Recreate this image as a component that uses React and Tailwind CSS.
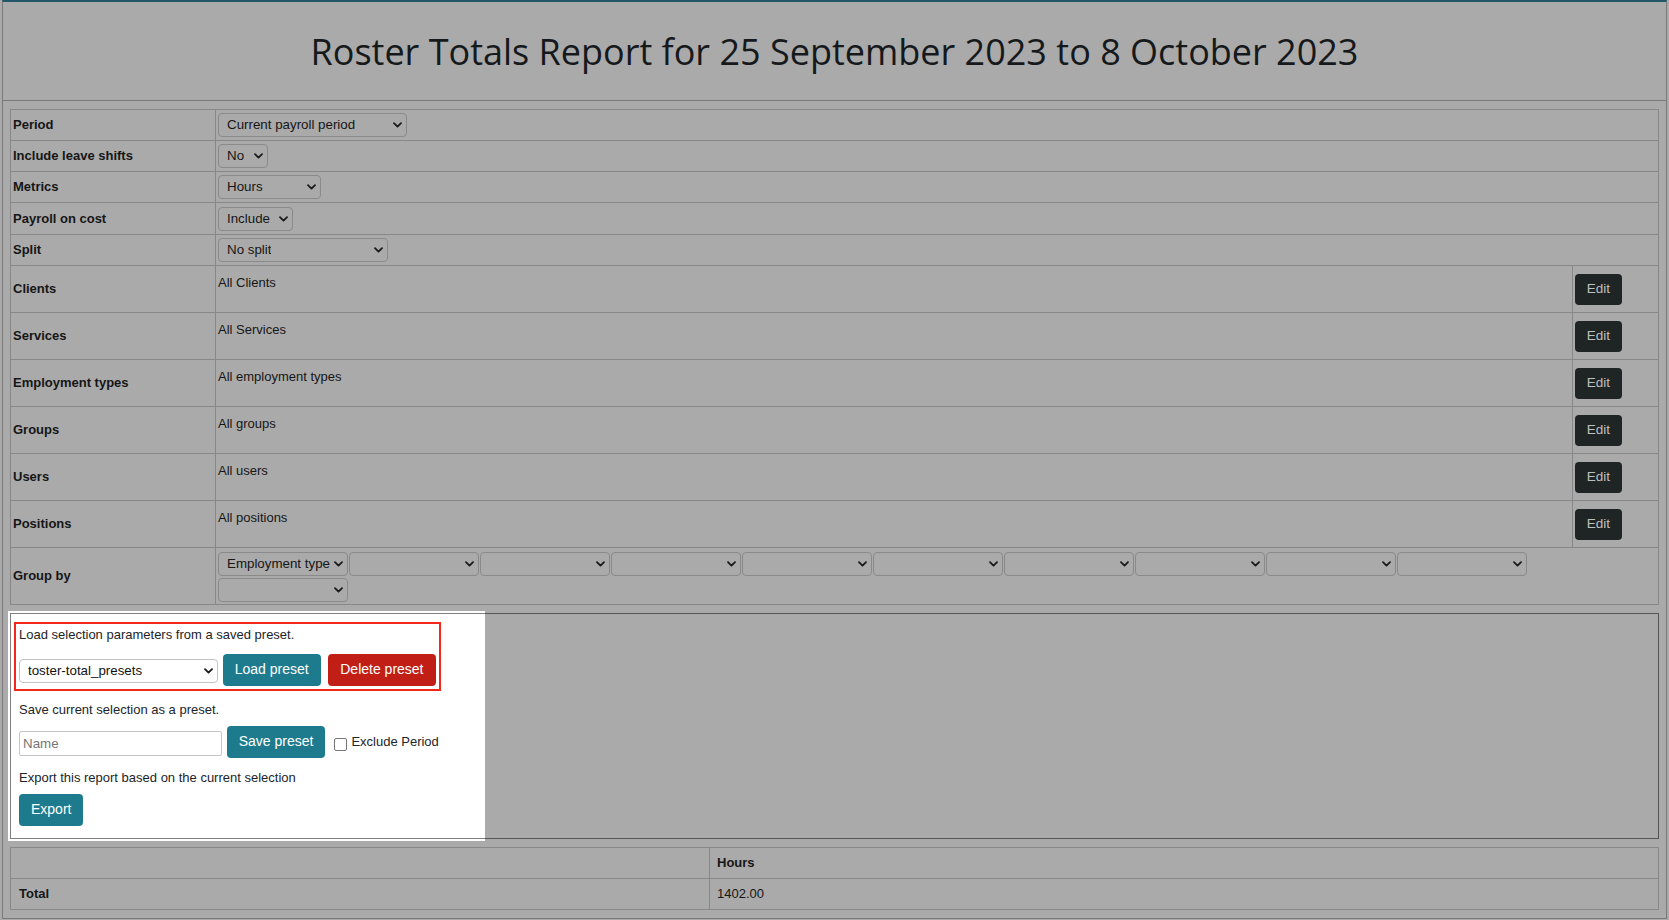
import React from "react";

const Chevron = () => (
  <svg width="9" height="6" viewBox="0 0 9 6" className="shrink-0">
    <path d="M1 1.2 L4.5 4.6 L8 1.2" fill="none" stroke="#1a1a1a" strokeWidth="1.8" strokeLinecap="round" strokeLinejoin="round" />
  </svg>
);

function Select({ className, text, light }) {
  return (
    <div
      className={
        "flex h-[24px] shrink-0 items-center justify-between rounded-[4px] border pl-[8px] pr-[4px] text-[13.33px] leading-[16px] " +
        (light ? "border-[#c4c4c4] bg-white text-[#111111] " : "border-[#8a8a8a] text-[#161616] ") +
        className
      }
    >
      <span className="truncate">{text}</span>
      <Chevron />
    </div>
  );
}

const simpleRows = [
  { label: "Period", h: "h-[31px]", sel: <Select className="w-[189px]" text="Current payroll period" /> },
  { label: "Include leave shifts", h: "h-[31px]", sel: <Select className="w-[49.5px]" text="No" /> },
  { label: "Metrics", h: "h-[31px]", sel: <Select className="w-[103px]" text="Hours" /> },
  { label: "Payroll on cost", h: "h-[32px]", sel: <Select className="w-[75px]" text="Include" /> },
  { label: "Split", h: "h-[31px]", sel: <Select className="w-[170px]" text="No split" /> },
];

const editRows = [
  ["Clients", "All Clients"],
  ["Services", "All Services"],
  ["Employment types", "All employment types"],
  ["Groups", "All groups"],
  ["Users", "All users"],
  ["Positions", "All positions"],
];

function Btn({ children, className }) {
  return (
    <div className={"flex shrink-0 items-center rounded-[4px] px-[12px] text-[14px] text-white " + className}>
      {children}
    </div>
  );
}

export default function App() {
  return (
    <div className="min-h-screen w-full bg-[#aaaaaa] font-['Liberation_Sans',Arial,sans-serif] text-[#161616]">
      <div className="ml-[2px] h-[919px] w-[1665px] border border-[#7a7a7a] border-t-2 border-t-[#24566a]">
        {/* header */}
        <div className="flex h-[99px] justify-center border-b border-[#7a7a7a] pt-[24.5px]">
          <h1 className="font-['Open_Sans',sans-serif] text-[36px] leading-[49px] font-normal text-[#16191c]">
            Roster Totals Report for 25 September 2023 to 8 October 2023
          </h1>
        </div>

        <div className="px-[7px] pt-[8px]">
          {/* main table */}
          <div className="border-l border-t border-[#888888] text-[13px]">
            {simpleRows.map((r) => (
              <div key={r.label} className={"flex border-b border-[#888888] " + r.h}>
                <div className="flex w-[205px] shrink-0 items-center border-r border-[#888888] pl-[2px] font-bold">
                  {r.label}
                </div>
                <div className="flex flex-1 items-center border-r border-[#888888] pl-[2px]">{r.sel}</div>
              </div>
            ))}
            {editRows.map(([label, value]) => (
              <div key={label} className="flex h-[47px] border-b border-[#888888]">
                <div className="flex w-[205px] shrink-0 items-center border-r border-[#888888] pl-[2px] font-bold">
                  {label}
                </div>
                <div className="flex-1 border-r border-[#888888] pl-[2px] pt-[9px] leading-[15px]">{value}</div>
                <div className="flex w-[86px] shrink-0 items-center border-r border-[#888888] pl-[2px]">
                  <div className="flex h-[31px] w-[47px] items-center justify-center rounded-[4px] bg-[#1f2425] text-[13.5px] text-[#bfbfbf]">
                    Edit
                  </div>
                </div>
              </div>
            ))}
            <div className="flex h-[57px] border-b border-[#888888]">
              <div className="flex w-[205px] shrink-0 items-center border-r border-[#888888] pl-[2px] font-bold">
                Group by
              </div>
              <div className="flex flex-1 flex-col gap-[2.7px] border-r border-[#888888] pl-[2px] pt-[3.5px]">
                <div className="flex gap-x-[1.5px]">
                  <Select className="w-[129.5px]" text="Employment type" />
                  <Select className="w-[129.5px]" text="" />
                  <Select className="w-[129.5px]" text="" />
                  <Select className="w-[129.5px]" text="" />
                  <Select className="w-[129.5px]" text="" />
                  <Select className="w-[129.5px]" text="" />
                  <Select className="w-[129.5px]" text="" />
                  <Select className="w-[129.5px]" text="" />
                  <Select className="w-[129.5px]" text="" />
                  <Select className="w-[129.5px]" text="" />
                </div>
                <div className="flex">
                  <Select className="w-[129.5px]" text="" />
                </div>
              </div>
            </div>
          </div>

          {/* presets panel */}
          <div className="relative mt-[8px]">
            <div className="absolute left-[-2.5px] top-[-2px] h-[230px] w-[477.5px] bg-white" />
            <div className="relative h-[226px] border border-black/50 pl-[8px] pt-[12.5px] text-[13px] leading-[15px] text-[#212529]">
              <div className="w-fit outline-2 outline-offset-3 outline-[#f3281b]">
                <div>Load selection parameters from a saved preset.</div>
                <div className="mt-[12.8px] flex items-center">
                  <Select light className="mt-[2.6px] w-[199px]" text="toster-total_presets" />
                  <Btn className="ml-[4.7px] h-[31.4px] bg-[#1e7b8e]">Load preset</Btn>
                  <Btn className="ml-[7.6px] h-[31.4px] bg-[#c11f16]">Delete preset</Btn>
                </div>
              </div>
              <div className="mt-[16.3px]">Save current selection as a preset.</div>
              <div className="mt-[9px] flex items-center">
                <input
                  readOnly
                  placeholder="Name"
                  className="mt-[3.6px] h-[25.3px] w-[203.4px] rounded-[2px] border border-[#c6c6c6] bg-white pl-[3px] text-[13.33px] outline-none placeholder:text-[#757575]"
                />
                <Btn className="ml-[4.3px] h-[31.7px] bg-[#1e7b8e]">Save preset</Btn>
                <div className="ml-[8.3px] mt-[4.8px] h-[13px] w-[13px] rounded-[2px] border border-[#767676] bg-white" />
                <div className="ml-[4.7px]">Exclude Period</div>
              </div>
              <div className="mt-[12.3px]">Export this report based on the current selection</div>
              <Btn className="mt-[9px] h-[31.7px] w-fit bg-[#1e7b8e]">Export</Btn>
            </div>
          </div>

          {/* totals */}
          <div className="mt-[8px] border-l border-t border-[#888888] text-[13px]">
            <div className="flex h-[31px] border-b border-[#888888]">
              <div className="w-[699px] shrink-0 border-r border-[#888888]" />
              <div className="flex flex-1 items-center border-r border-[#888888] pl-[7px] font-bold">Hours</div>
            </div>
            <div className="flex h-[31px] border-b border-[#888888]">
              <div className="flex w-[699px] shrink-0 items-center border-r border-[#888888] pl-[8px] font-bold">
                Total
              </div>
              <div className="flex flex-1 items-center border-r border-[#888888] pl-[7px]">1402.00</div>
            </div>
          </div>
        </div>
      </div>
    </div>
  );
}
